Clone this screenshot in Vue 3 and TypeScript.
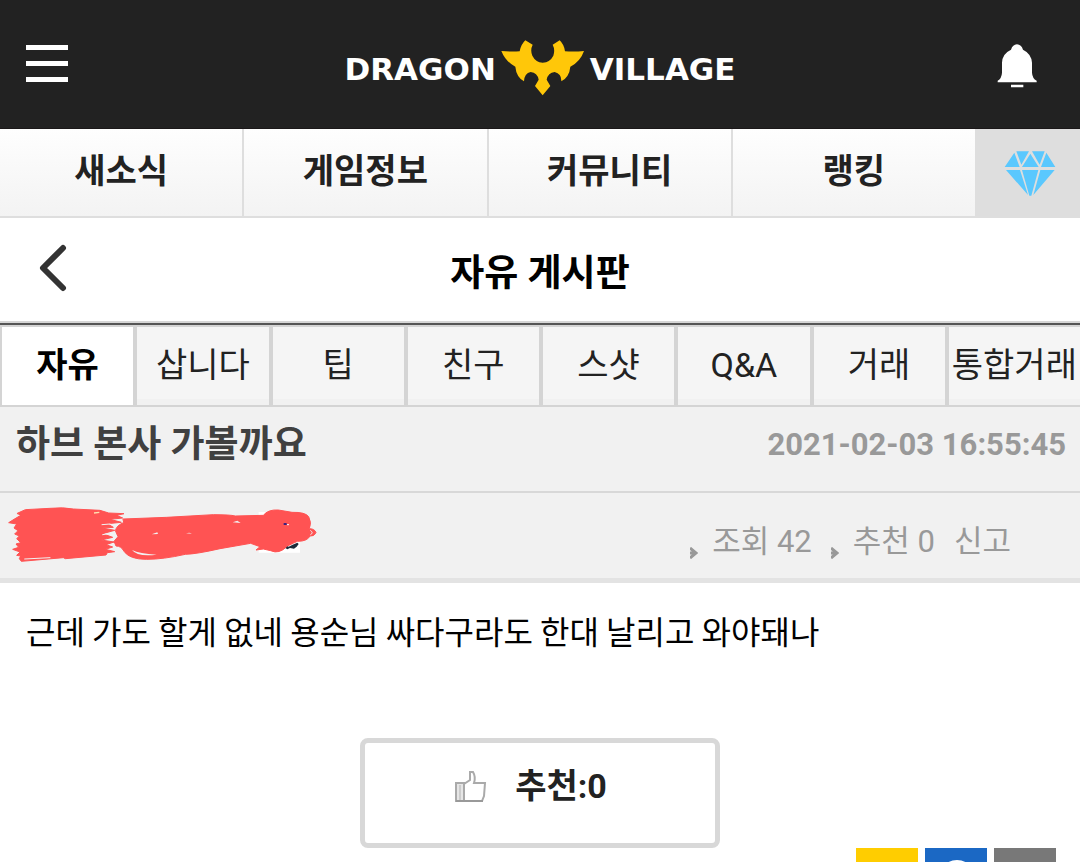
<script setup lang="ts">
import { ref } from 'vue'

const menus: string[] = ['새소식', '게임정보', '커뮤니티', '랭킹']
const boards: string[] = ['자유', '삽니다', '팁', '친구', '스샷', 'Q&A', '거래', '통합거래']
const activeBoard = ref('자유')
const likes = ref(0)
</script>

<template>
  <div class="page">
    <header class="top">
      <button class="icon-btn" type="button" aria-label="메뉴">
        <svg width="42" height="38" viewBox="0 0 42 38">
          <path d="M0 0h42v5H0zM0 16h42v5H0zM0 32h42v5H0z" fill="#fff" />
        </svg>
      </button>
      <a class="logo" href="#">
        <span class="word">DRAGON</span>
        <svg class="emblem" width="84" height="56" viewBox="32 44 252 168">
          <path
            fill="#ffc709"
            d="M33 77Q62 80 88 78Q92 57 105 45L127 58Q119 74 126 91Q136 111 157 112Q179 111 189 91Q195 73 187 58L208 45Q221 57 224 78Q253 80 281 77Q270 109 240 124Q237 155 213 168Q214 145 193 140Q173 142 169 163L180 182L157 210L134 182L145 163Q141 142 121 140Q102 144 101 168Q78 155 75 124Q46 109 33 77Z"
          />
        </svg>
        <span class="word">VILLAGE</span>
      </a>
      <button class="icon-btn" type="button" aria-label="알림">
        <svg width="40" height="44" viewBox="0 0 120 132">
          <path
            fill="#fff"
            d="M60 1Q73 2 78 17Q103 29 105 56V86Q106 103 119 110V115H2V110Q14 103 15 86V56Q16 29 42 17Q47 2 60 1ZM42 122H79V130H42Z"
          />
        </svg>
      </button>
    </header>

    <nav class="menu">
      <a v-for="m in menus" :key="m" class="menu-item" href="#">{{ m }}</a>
      <a class="gem" href="#" aria-label="다이아">
        <svg width="52" height="46" viewBox="0 0 156 138">
          <path
            fill="#5ac8fe"
            d="M31 5L47 48H2ZM37 1H75L52 41ZM79 8L104 48H54ZM84 1H122L107 41ZM127 5L154 48H111ZM6 57H48L72 132ZM54 57H103L82 134H76ZM109 57H152L88 132Z"
          />
        </svg>
      </a>
    </nav>

    <div class="board-head">
      <button class="icon-btn" type="button" aria-label="뒤로">
        <svg width="28" height="48" viewBox="0 0 28 48">
          <path d="M24 4L4 24L24 44" fill="none" stroke="#333" stroke-width="6" stroke-linecap="round" stroke-linejoin="round" />
        </svg>
      </button>
      <h1>자유 게시판</h1>
    </div>

    <nav class="tabs">
      <a
        v-for="b in boards"
        :key="b"
        class="tab"
        :class="{ active: b === activeBoard }"
        href="#"
        @click.prevent="activeBoard = b"
      >{{ b }}</a>
    </nav>

    <article>
      <div class="post-title">
        <h2>하브 본사 가볼까요</h2>
        <time datetime="2021-02-03T16:55:45">2021-02-03 16:55:45</time>
      </div>

      <div class="meta">
        <svg class="author" width="340" height="85" viewBox="0 9 1020 255" aria-hidden="true">
          <path d="M776 66H850V110H900V188H776Z" fill="#fff" />
          <path d="M852 172l6-6 8 4 12-6 14-6 4 4-6 8-8 6-12-2-8 4z" fill="#1c2b3a" />
          <g fill="#ff5353" stroke="#ff5353" stroke-linejoin="round" stroke-linecap="round">
            <path
              stroke-width="3"
              d="M52 70L76 59L150 55Q190 51 220 57L300 61L326 69L372 71L350 76L368 84L330 88L364 97L322 101L340 112L306 114L344 121L308 131L338 142L304 150L342 156L318 164L338 171L316 178L344 185L322 188L318 195L196 206L190 203L64 214L58 206L62 198L50 196L60 186L38 178L56 172L48 162L62 158L50 146L58 138L44 132L54 122L42 114L50 102L26 98L42 88L62 76Z"
            />
            <path
              stroke-width="3"
              d="M370 87L500 82L640 74Q690 74 706 78L790 76Q804 58 835 60L876 67Q916 66 926 80Q936 98 928 116Q944 116 948 128Q942 140 930 138Q922 154 892 154Q884 158 862 168Q838 194 812 182L790 177L768 180L780 170L752 160L660 176Q590 192 556 193Q490 208 440 208Q388 208 372 184Q364 168 348 168L342 154L354 140L346 122Q350 106 370 98Z"
            />
          </g>
          <g fill="#f1f1f1">
            <path d="M396 180Q418 191 470 194Q412 201 396 180ZM455 133L472 127L474 132ZM558 130L568 128L576 131ZM698 97L712 92L722 99Z" />
          </g>
          <path
            d="M306 104L330 102M308 134L340 129M74 207L150 203M932 122Q942 128 932 134"
            fill="none"
            stroke="#f1f1f1"
            stroke-width="3"
            stroke-linecap="round"
          />
          <path d="M282 69L298 67" stroke="#ffe0b0" stroke-width="4" />
          <path d="M851 102H860" stroke="#13188a" stroke-width="5" />
          <path d="M861 104H867" stroke="#fff" stroke-width="3" />
        </svg>
        <ul class="stats">
          <li>
            <svg class="arrow" width="8" height="12" viewBox="0 0 8 12"><path d="M0 1L6 6L0 11M0 6H6" fill="none" stroke="#999" stroke-width="3" /></svg>
            조회 42
          </li>
          <li>
            <svg class="arrow" width="8" height="12" viewBox="0 0 8 12"><path d="M0 1L6 6L0 11M0 6H6" fill="none" stroke="#999" stroke-width="3" /></svg>
            추천 0
          </li>
          <li><a href="#">신고</a></li>
        </ul>
      </div>

      <p class="content">근데 가도 할게 없네 용순님 싸다구라도 한대 날리고 와야돼나</p>
    </article>

    <button class="like" type="button" @click="likes++">
      <svg width="32" height="32" viewBox="0 0 32 32" fill="none" stroke="#999" stroke-width="2">
        <path d="M9 13L15 9V1H18Q21 6 19 12H30L29 25L27 30H9Z" stroke="#aaa" />
        <path d="M1 12H9V30H1Z" fill="#e6e6e6" stroke="#aaa" />
        <path d="M5 14V29" stroke="#ccc" />
        <path d="M1 30H28" />
      </svg>
      <span>추천:{{ likes }}</span>
    </button>

    <div class="share">
      <a class="kakao" href="#" aria-label="카카오"></a>
      <a class="band" href="#" aria-label="공유">
        <svg width="60" height="56" viewBox="0 0 60 56"><circle cx="32" cy="26" r="16" fill="none" stroke="#fff" stroke-width="4" /></svg>
      </a>
      <a class="link" href="#" aria-label="링크"></a>
    </div>
  </div>
</template>

<style>
body {
  margin: 0;
  background: #fff;
}
</style>

<style scoped>
.page {
  height: 100vh;
  overflow: hidden;
  font-family: Roboto, "Noto Sans CJK KR", sans-serif;
  color: #222;
}
a {
  color: inherit;
  text-decoration: none;
}
svg {
  display: block;
}
h1,
h2,
p,
ul {
  margin: 0;
  padding: 0;
}
button {
  font: inherit;
  color: inherit;
  cursor: pointer;
}
.icon-btn {
  padding: 0;
  border: 0;
  background: none;
}
.top {
  display: grid;
  grid-template-columns: 1fr auto 1fr;
  align-items: center;
  box-sizing: border-box;
  height: 129px;
  padding: 4px 43px 0 26px;
  background: #222;
  border-bottom: 1px solid #1b1819;
}
.top .icon-btn:first-child {
  justify-self: start;
  margin-bottom: 4px;
}
.top .icon-btn:last-child {
  justify-self: end;
}
.logo {
  display: flex;
  align-items: center;
  gap: 5px;
  margin-left: 17px;
  padding-top: 4px;
  color: #fff;
}
.word {
  padding-top: 2px;
  font: bold 31px/32px "DejaVu Sans", sans-serif;
}
.menu {
  display: flex;
  height: 89px;
}
.menu-item {
  flex: 1 1 0;
  border-right: 2px solid #dedede;
  border-bottom: 2px solid #dedede;
  background: linear-gradient(#fefefe, #f3f3f3);
  font-size: 34px;
  font-weight: bold;
  line-height: 84px;
  text-align: center;
}
.menu-item:nth-child(4) {
  border-right: 0;
}
.gem {
  display: flex;
  align-items: center;
  justify-content: center;
  flex: none;
  box-sizing: border-box;
  width: 105px;
  padding-left: 4px;
  background: #dedede;
}
.board-head {
  display: grid;
  grid-template-columns: 1fr auto 1fr;
  align-items: center;
  height: 103px;
  padding: 0 39px;
}
.board-head .icon-btn {
  justify-self: start;
  margin-bottom: 4px;
}
h1 {
  padding-top: 8px;
  color: #000;
  font-size: 37px;
  line-height: 50px;
}
.tabs {
  display: grid;
  grid-template-columns: repeat(8, 1fr);
  margin-right: -2px;
  border-top: 2px solid #d6d6d6;
  background: #d6d6d6;
}
.tabs::before {
  content: "";
  grid-column: 1 / -1;
  height: 2px;
  background: #555;
}
.tab {
  box-sizing: border-box;
  height: 82px;
  border: 2px solid #d4d4d4;
  background: linear-gradient(#f5f5f5 72px, #f1f1f1 72px);
  font-size: 34px;
  line-height: 76px;
  text-align: center;
  white-space: nowrap;
}
.tab.active {
  background: #fff;
  color: #000;
  font-weight: bold;
}
.post-title {
  display: flex;
  justify-content: space-between;
  box-sizing: border-box;
  height: 86px;
  padding: 0 14px 0 16px;
  border-bottom: 2px solid #d8d8d8;
  background: #f1f1f1;
  line-height: 76px;
}
h2 {
  color: #404040;
  font-size: 37px;
}
time {
  color: #999;
  font-size: 31px;
  font-weight: bold;
}
.meta {
  display: flex;
  justify-content: space-between;
  height: 85px;
  padding-right: 69px;
  border-bottom: 5px solid #e3e3e3;
  background: #f1f1f1;
}
.stats {
  display: flex;
  gap: 19px;
  list-style: none;
  color: #999;
  font-size: 31px;
  line-height: 98px;
}
.stats li {
  display: flex;
  gap: 14px;
}
.arrow {
  margin-top: 54px;
}
.content {
  padding: 22px 26px 0;
  color: #000;
  font-family: "Noto Sans CJK KR", sans-serif;
  font-size: 32px;
  line-height: 50px;
}
.like {
  display: flex;
  align-items: flex-start;
  justify-content: center;
  gap: 28px;
  box-sizing: border-box;
  width: 33.333%;
  height: 110px;
  margin: 83px auto 0;
  padding: 16px 18px 0 0;
  border: 5px solid #d8d8d8;
  border-radius: 8px;
  background: #fff;
  font-size: 34px;
  font-weight: bold;
  line-height: 54px;
}
.like svg {
  margin-top: 12px;
}
.share {
  display: flex;
  justify-content: flex-end;
  gap: 7px;
  padding-right: 24px;
}
.share a {
  width: 62px;
  height: 62px;
}
.share svg {
  margin-top: 4px;
}
.kakao {
  background: #ffcd00;
}
.band {
  background: #1b68c4;
}
.link {
  background: #787878;
}
</style>
